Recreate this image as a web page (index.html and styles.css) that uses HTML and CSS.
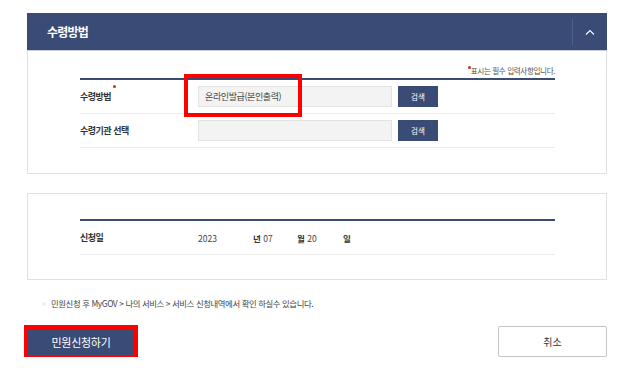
FILE: index.html
```html
<!DOCTYPE html>
<html lang="ko">
<head>
<meta charset="utf-8">
<link rel="stylesheet" href="styles.css">
</head>
<body>
<div class="page">
  <section class="panel">
    <header class="panel-head">
      <h2 class="panel-title">수령방법</h2>
      <button class="toggle" type="button" aria-label="접기">
        <svg width="10" height="6" viewBox="0 0 10 6"><path d="M1 5.5 L5 1.5 L9 5.5" fill="none" stroke="#fff" stroke-width="1.1"/></svg>
      </button>
    </header>
    <div class="panel-body">
      <p class="req-note"><span class="req-mark"></span>표시는 필수 입력사항입니다.</p>
      <div class="form-table">
        <div class="row">
          <div class="label">수령방법<span class="req-dot"></span></div>
          <div class="field">
            <div class="input-wrap">
              <div class="input">온라인발급(본인출력)</div>
              <div class="highlight"></div>
            </div>
            <button class="btn-search" type="button">검색</button>
          </div>
        </div>
        <div class="row">
          <div class="label">수령기관 선택</div>
          <div class="field">
            <div class="input-wrap">
              <div class="input"></div>
            </div>
            <button class="btn-search" type="button">검색</button>
          </div>
        </div>
      </div>
    </div>
  </section>

  <section class="panel panel-date">
    <div class="panel-body body-date">
      <div class="form-table">
        <div class="row">
          <div class="label">신청일</div>
          <div class="field date">
            <span class="d-year">2023</span>
            <span class="d-month"><b>년</b> 07</span>
            <span class="d-day"><b>월</b> 20</span>
            <span><b>일</b></span>
          </div>
        </div>
      </div>
    </div>
  </section>

  <p class="info"><span class="bullet">◦</span>민원신청 후 MyGOV &gt; 나의 서비스 &gt; 서비스 신청내역에서 확인 하실수 있습니다.</p>

  <div class="actions">
    <button class="btn-primary" type="button">민원신청하기</button>
    <button class="btn-cancel" type="button">취소</button>
  </div>
</div>
</body>
</html>
```

FILE: styles.css
```css
* { box-sizing: border-box; }
html, body { margin: 0; padding: 0; background: #fff; }
body {
  font-family: "Noto Sans CJK KR", "Noto Sans", "Liberation Sans", sans-serif;
  color: #333;
}
.page {
  width: 636px;
  padding: 13px 29px 0 27px;
}
.panel {
  border: 1px solid #e1e1e1;
  border-top: none;
}
.panel-head {
  height: 38px;
  margin: 0 -1px;
  background: #3a4b75;
  display: flex;
  align-items: center;
  justify-content: space-between;
  border-bottom: 1px solid #c9cfdc;
}
.panel-title {
  margin: 0 0 0 20px;
  color: #fff;
  font-size: 12px;
  font-weight: 700;
  letter-spacing: -0.8px;
}
.toggle {
  width: 35px;
  height: 26px;
  padding: 0;
  border: none;
  border-left: 1px solid rgba(255,255,255,0.12);
  background: transparent;
  display: flex;
  align-items: center;
  justify-content: center;
}
.panel-body {
  padding: 14px 51px 25px 52px;
}
.req-note {
  margin: 0 0 2px;
  height: 11px;
  line-height: 11px;
  font-size: 7.6px;
  text-align: right;
  color: #555;
  letter-spacing: -0.4px;
}
.req-mark {
  display: inline-block;
  width: 3px;
  height: 3px;
  background: #e2231a;
  border-radius: 50%;
  vertical-align: top;
  margin-top: 1px;
}
.form-table {
  border-top: 2px solid #3a4b75;
}
.row {
  display: flex;
  align-items: center;
  height: 34px;
  border-bottom: 1px solid #ececec;
}
.label {
  width: 118px;
  font-size: 9px;
  font-weight: 700;
  color: #333;
  letter-spacing: -0.5px;
  position: relative;
}
.req-dot {
  position: absolute;
  top: -5px;
  margin-left: 2px;
  width: 3px;
  height: 3px;
  border-radius: 50%;
  background: #e2231a;
}
.field {
  display: flex;
  align-items: center;
  gap: 6px;
}
.input-wrap { position: relative; }
.input {
  width: 194px;
  height: 21px;
  background: #f3f3f3;
  border: 1px solid #e3e3e3;
  font-size: 9px;
  line-height: 19px;
  padding-left: 6px;
  color: #444;
  letter-spacing: -0.4px;
}
.highlight {
  position: absolute;
  left: -14px;
  top: -12px;
  width: 118px;
  height: 43px;
  border: 4px solid #ff0000;
}
.btn-search {
  width: 40px;
  height: 21px;
  border: none;
  padding: 0;
  background: #3a4b75;
  color: #fff;
  font-family: inherit;
  font-size: 7.5px;
}
.panel-date {
  margin-top: 19px;
  border-top: 1px solid #e1e1e1;
}
.body-date {
  padding-top: 25px;
  padding-bottom: 24px;
}
.date {
  gap: 0;
  font-size: 8.5px;
  color: #444;
}
.date b { font-weight: 700; color: #333; }
.d-year { width: 55px; }
.d-month { width: 44px; }
.d-day { width: 46px; }
.info {
  margin: 17px 0 0;
  padding-left: 13px;
  height: 12px;
  line-height: 12px;
  font-size: 8.4px;
  color: #444;
  letter-spacing: -0.4px;
}
.bullet {
  color: #aaa;
  margin-right: 3px;
}
.actions {
  margin-top: 17px;
  display: flex;
  align-items: center;
  justify-content: space-between;
}
.btn-primary {
  margin-left: 1px;
  width: 106px;
  height: 26px;
  border: none;
  background: #3a4b75;
  color: #fff;
  font-family: inherit;
  font-size: 11px;
  outline: 4px solid #ff0000;
  letter-spacing: -0.3px;
}
.btn-cancel {
  width: 109px;
  height: 31px;
  background: #fff;
  border: 1px solid #c4c4c4;
  border-radius: 2px;
  color: #333;
  font-family: inherit;
  font-size: 10px;
}
```
